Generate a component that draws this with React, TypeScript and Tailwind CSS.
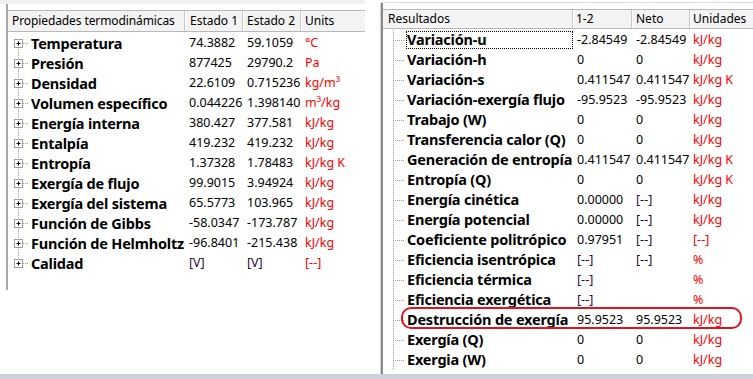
import React from 'react';

type Row = [string, string, string, string];

const propRows: Row[] = [
  ['Temperatura', '74.3882', '59.1059', '°C'],
  ['Presión', '877425', '29790.2', 'Pa'],
  ['Densidad', '22.6109', '0.715236', 'kg/m³'],
  ['Volumen específico', '0.044226', '1.398140', 'm³/kg'],
  ['Energía interna', '380.427', '377.581', 'kJ/kg'],
  ['Entalpía', '419.232', '419.232', 'kJ/kg'],
  ['Entropía', '1.37328', '1.78483', 'kJ/kg K'],
  ['Exergía de flujo', '99.9015', '3.94924', 'kJ/kg'],
  ['Exergía del sistema', '65.5773', '103.965', 'kJ/kg'],
  ['Función de Gibbs', '-58.0347', '-173.787', 'kJ/kg'],
  ['Función de Helmholtz', '-96.8401', '-215.438', 'kJ/kg'],
  ['Calidad', '[V]', '[V]', '[--]'],
];

const resultRows: Row[] = [
  ['Variación-u', '-2.84549', '-2.84549', 'kJ/kg'],
  ['Variación-h', '0', '0', 'kJ/kg'],
  ['Variación-s', '0.411547', '0.411547', 'kJ/kg K'],
  ['Variación-exergía flujo', '-95.9523', '-95.9523', 'kJ/kg'],
  ['Trabajo (W)', '0', '0', 'kJ/kg'],
  ['Transferencia calor (Q)', '0', '0', 'kJ/kg'],
  ['Generación de entropía', '0.411547', '0.411547', 'kJ/kg K'],
  ['Entropía (Q)', '0', '0', 'kJ/kg K'],
  ['Energía cinética', '0.00000', '[--]', 'kJ/kg'],
  ['Energía potencial', '0.00000', '[--]', 'kJ/kg'],
  ['Coeficiente politrópico', '0.97951', '[--]', '[--]'],
  ['Eficiencia isentrópica', '[--]', '[--]', '%'],
  ['Eficiencia térmica', '[--]', '', '%'],
  ['Eficiencia exergética', '[--]', '', '%'],
  ['Destrucción de exergía', '95.9523', '95.9523', 'kJ/kg'],
  ['Exergía (Q)', '0', '0', 'kJ/kg'],
  ['Exergia (W)', '0', '0', 'kJ/kg'],
];

const valueColor = (v: string) => (v.startsWith('[') ? 'text-[#2a0a3a]' : 'text-black');

// expander with dotted tree lines (left list)
const PlusNode = ({ first, last }: { first: boolean; last: boolean }) => (
  <svg width="23" height="20" className="shrink-0">
    <line x1="10.5" y1={first ? 10 : 0} x2="10.5" y2={last ? 10 : 20} stroke="#a0a0a0" strokeDasharray="1 1" />
    <line x1="15" y1="10.5" x2="21" y2="10.5" stroke="#a0a0a0" strokeDasharray="1 1" />
    <rect x="6.5" y="6.5" width="8" height="8" fill="#fff" stroke="#a0a0a0" />
    <line x1="8.5" y1="10.5" x2="12.5" y2="10.5" stroke="#000" />
    <line x1="10.5" y1="8.5" x2="10.5" y2="12.5" stroke="#000" />
  </svg>
);

// leaf tree lines (right list)
const LeafNode = () => (
  <svg width="23" height="20" className="shrink-0">
    <line x1="10.5" y1="0" x2="10.5" y2="20" stroke="#a0a0a0" strokeDasharray="1 1" />
    <line x1="12" y1="10.5" x2="21" y2="10.5" stroke="#a0a0a0" strokeDasharray="1 1" />
  </svg>
);

const HeaderCell = ({ children, className = '' }: { children: React.ReactNode; className?: string }) => (
  <div className={`flex items-center h-full whitespace-nowrap overflow-hidden border-r border-[#c8c8c8] shadow-[1px_0_0_#fff] ${className}`}>
    {children}
  </div>
);

export default function App() {
  return (
    <div className="w-[753px] h-[379px] bg-white flex flex-col overflow-hidden font-['Noto_Sans','Open_Sans',sans-serif] text-black">
      <div className="flex flex-1 min-h-0">
        {/* Left list: propiedades */}
        <div className="w-[365px] flex flex-col">
          <div className="h-[4px] bg-[#f0f0f0]" />
          <div className="ml-[6px] h-[286px] border-l-2 border-[#a8a8a8] pt-[6px]">
            <div className="h-[22px] grid grid-cols-[177px_58px_58px_1fr] bg-[#f3f3f3] border-t border-b border-[#b8b8b8] text-[12px] leading-none">
              <HeaderCell className="pl-[4px] tracking-[-0.1px]">Propiedades termodinámicas</HeaderCell>
              <HeaderCell className="pl-[5px]">Estado 1</HeaderCell>
              <HeaderCell className="pl-[4px]">Estado 2</HeaderCell>
              <div className="flex items-center pl-[4px] whitespace-nowrap">Units</div>
            </div>
            <div className="pt-[1px]">
              {propRows.map((r, i) => (
                <div key={r[0]} className="h-[20px] grid grid-cols-[177px_58px_58px_1fr] items-center">
                  <div className="flex items-center">
                    <PlusNode first={i === 0} last={i === propRows.length - 1} />
                    <span className="font-bold text-[14.5px] tracking-[-0.2px] whitespace-nowrap leading-none">{r[0]}</span>
                  </div>
                  <span className={`pl-[4px] text-[12.5px] whitespace-nowrap ${valueColor(r[1])}`}>{r[1]}</span>
                  <span className={`pl-[4px] text-[12.5px] whitespace-nowrap ${valueColor(r[2])}`}>{r[2]}</span>
                  <span className="pl-[4px] text-[12.5px] whitespace-nowrap text-[#ff0000]">{r[3]}</span>
                </div>
              ))}
            </div>
          </div>
        </div>

        {/* Right list: resultados */}
        <div className="ml-[16px] flex-1 flex flex-col">
          <div className="h-[3px] border-b border-[#dadada]" />
          <div className="flex-1 relative border-l-2 border-[#8a8a8a] shadow-[-1px_0_0_#d0d0d0] pt-[6px]">
            <div className="h-[20px] grid grid-cols-[190px_59px_58px_1fr] bg-[#f3f3f3] border-t border-b border-[#b8b8b8] text-[12px] leading-none">
              <HeaderCell className="pl-[5px]">Resultados</HeaderCell>
              <HeaderCell className="pl-[3px]">1-2</HeaderCell>
              <HeaderCell className="pl-[4px]">Neto</HeaderCell>
              <div className="flex items-center pl-[3px] whitespace-nowrap">Unidades</div>
            </div>
            <div className="pt-[1px]">
              {resultRows.map((r, i) => (
                <div key={r[0]} className="h-[20px] grid grid-cols-[190px_59px_58px_1fr] items-center">
                  <div className="flex items-center h-full">
                    <LeafNode />
                    <span
                      className={`h-[18px] flex items-center flex-1 pl-[1px] font-bold text-[14.5px] tracking-[-0.2px] whitespace-nowrap ${
                        i === 0 ? 'outline-1 outline-dotted outline-black -outline-offset-1' : ''
                      }`}
                    >
                      {r[0]}
                    </span>
                  </div>
                  <span className={`pl-[4px] text-[12.5px] whitespace-nowrap ${valueColor(r[1])}`}>{r[1]}</span>
                  <span className={`pl-[4px] text-[12.5px] whitespace-nowrap ${valueColor(r[2])}`}>{r[2]}</span>
                  <span className="pl-[3px] text-[12.5px] whitespace-nowrap text-[#ff0000]">{r[3]}</span>
                </div>
              ))}
            </div>
            {/* highlight around Destrucción de exergía */}
            <div className="absolute left-[18px] top-[304px] w-[341px] h-[22px] border-2 border-[#e3121e] rounded-[10px]" />
          </div>
        </div>
      </div>
      <div className="h-[5px] bg-[#cbd2dc]" />
    </div>
  );
}
